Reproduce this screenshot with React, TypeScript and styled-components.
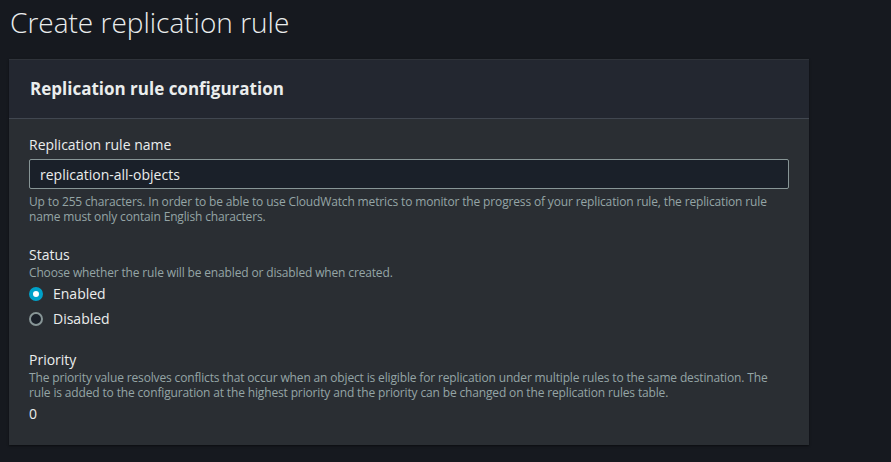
import React, { useState } from "react";
import styled, { createGlobalStyle } from "styled-components";

const GlobalStyle = createGlobalStyle`
    body {
        margin: 0;
        background: #16191f;
        font-family: "Open Sans", "Noto Sans", sans-serif;
        color: #d5dbdb;
    }
`;

const App = () => {
    const [status, setStatus] = useState("enabled");

    return (
        <>
            <GlobalStyle />
            <Page>
                <Title>Create replication rule</Title>
                <Panel>
                    <PanelHeader>
                        <PanelTitle>Replication rule configuration</PanelTitle>
                    </PanelHeader>
                    <PanelBody>
                        <Field>
                            <Label htmlFor="rule-name">Replication rule name</Label>
                            <Input id="rule-name" defaultValue="replication-all-objects" />
                            <Hint>
                                Up to 255 characters. In order to be able to use CloudWatch metrics to monitor the
                                progress of your replication rule, the replication rule name must only contain
                                English characters.
                            </Hint>
                        </Field>
                        <Field>
                            <Label>Status</Label>
                            <Description>Choose whether the rule will be enabled or disabled when created.</Description>
                            <RadioGroup>
                                {[
                                    { value: "enabled", text: "Enabled" },
                                    { value: "disabled", text: "Disabled" },
                                ].map((opt) => (
                                    <RadioRow key={opt.value} onClick={() => setStatus(opt.value)}>
                                        <RadioDot $checked={status === opt.value} />
                                        <span>{opt.text}</span>
                                    </RadioRow>
                                ))}
                            </RadioGroup>
                        </Field>
                        <Field>
                            <Label>Priority</Label>
                            <Description>
                                The priority value resolves conflicts that occur when an object is eligible for
                                replication under multiple rules to the same destination. The rule is added to the
                                configuration at the highest priority and the priority can be changed on the
                                replication rules table.
                            </Description>
                            <Value>0</Value>
                        </Field>
                    </PanelBody>
                </Panel>
            </Page>
        </>
    );
};

export default App;

const Page = styled.div`
    padding: 0 82px 18px 9px;
    width: 891px;
    box-sizing: border-box;
`;

const Title = styled.h1`
    margin: 0;
    padding: 4px 0 0 1px;
    height: 59px;
    box-sizing: border-box;
    font-size: 28px;
    font-weight: 300;
    color: #eaeded;
    line-height: 36px;
`;

const Panel = styled.section`
    background: #2a2e33;
    box-shadow: 0 1px 2px rgba(0, 0, 0, 0.5);
    border-top: 1px solid #2f333a;
`;

const PanelHeader = styled.div`
    background: #232730;
    border-bottom: 1px solid #414750;
    padding: 17px 20px 17px 21px;
`;

const PanelTitle = styled.h2`
    margin: 0;
    font-size: 17px;
    font-weight: 700;
    line-height: 24px;
    color: #eaeded;
`;

const PanelBody = styled.div`
    padding: 16px 20px 21px 20px;
    display: flex;
    flex-direction: column;
    gap: 20px;
`;

const Field = styled.div`
    display: flex;
    flex-direction: column;
`;

const Label = styled.label`
    font-size: 14px;
    line-height: 20px;
    color: #eaeded;
`;

const Input = styled.input`
    margin-top: 4px;
    height: 30px;
    box-sizing: border-box;
    background: #1a2029;
    border: 1px solid #879596;
    border-radius: 2px;
    padding: 0 10px;
    font-family: inherit;
    font-size: 14px;
    color: #eaeded;
    outline: none;
`;

const Hint = styled.div`
    margin: 5px 0 1px;
    font-size: 12px;
    line-height: 15px;
    letter-spacing: -0.15px;
    color: #95a5a6;
`;

const Description = styled.div`
    font-size: 12px;
    line-height: 15px;
    letter-spacing: -0.15px;
    color: #95a5a6;
`;

const RadioGroup = styled.div`
    margin: 4px 0 1px;
    display: flex;
    flex-direction: column;
    gap: 5px;
`;

const RadioRow = styled.div`
    display: flex;
    align-items: center;
    gap: 10px;
    font-size: 14px;
    line-height: 20px;
    color: #eaeded;
    cursor: pointer;
`;

const RadioDot = styled.span<{ $checked: boolean }>`
    width: 14px;
    height: 14px;
    box-sizing: border-box;
    border-radius: 50%;
    border: ${(p) => (p.$checked ? "4px solid #00a1c9" : "2px solid #879596")};
    background: ${(p) => (p.$checked ? "#ffffff" : "#1a2029")};
`;

const Value = styled.div`
    margin-top: 4px;
    font-size: 14px;
    line-height: 20px;
    color: #eaeded;
`;
